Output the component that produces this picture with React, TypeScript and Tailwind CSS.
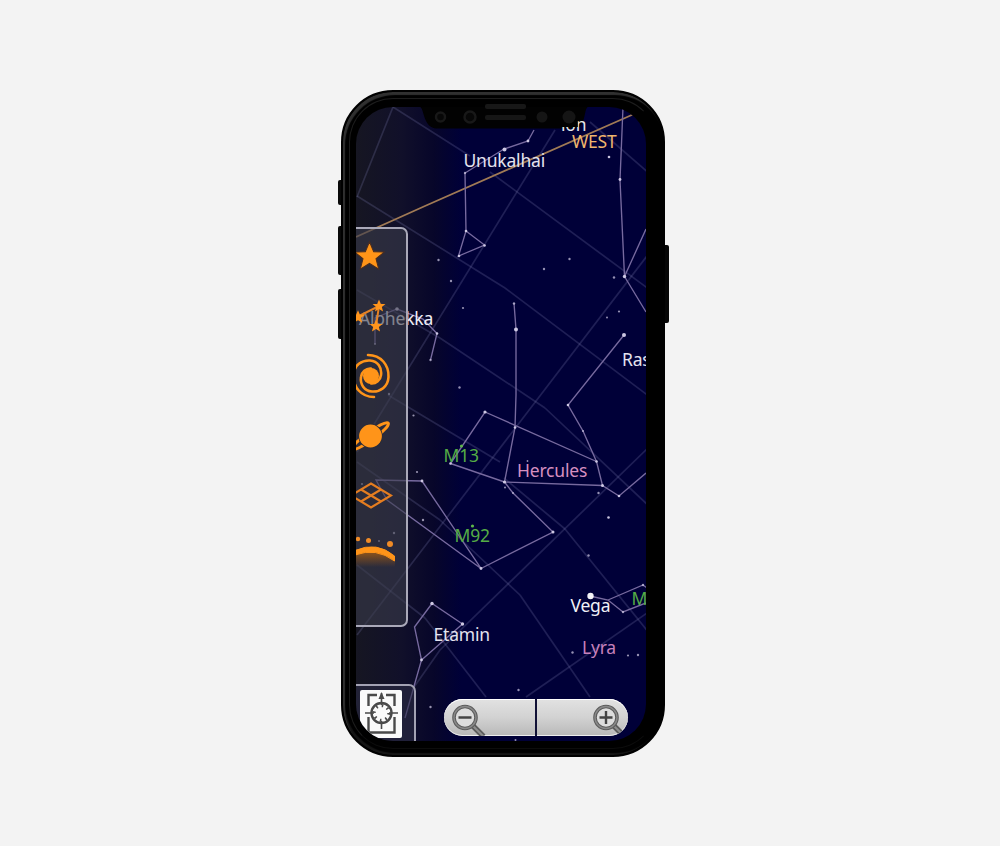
const gridLines: number[][] = [
  [393, 107, 357, 197], [393, 107, 470, 156], [490, 172, 650, 290],
  [357, 196, 505, 288], [505, 288, 650, 397], [555, 130, 357, 452], [590, 122, 650, 174],
  [357, 290, 440, 338], [440, 338, 545, 408], [545, 408, 650, 507], [650, 252, 357, 635],
  [388, 395, 500, 462], [504, 478, 565, 529], [565, 529, 650, 634], [357, 462, 440, 520], [440, 520, 520, 595],
  [650, 446, 440, 650], [440, 650, 412, 690], [357, 565, 425, 618],
  [425, 618, 486, 697], [520, 595, 590, 697], [650, 611, 526, 697],
];

const paths: string[] = [
  "M534 130L528 141L504 149L465 173L466 231L458.500 256L484.500 245L466 231",
  "M623 107L620 180L624.500 276.500L646 229M624.500 276.500L646 312",
  "M514 303L516 329.500V395L515 427.500L504.500 482L513 493L553 532L481 568.500L422 481L376 480L387 500L481 568.500",
  "M624 335L568 405L583 431L596.500 461.500L602.500 485.500L619 496L646 473",
  "M450.500 463.500L485 412L596.500 461.500M450.500 463.500L504.500 482L602.500 485.500",
  "M375 344V318L397 309L423 319L437 333.500L430.500 360",
  "M462.500 624L432 603.500L414.500 627L421.500 660L405 718M462.500 624L421.500 660",
  "M590 596L608 600L623 612L646 603M608 600L643 585L647 588",
];

const stars: number[][] = [
  [504.5, 149.5, 2], [528, 141, 1.4], [465, 173, 1.2], [609, 157, 1.3], [620, 179.5, 1.4],
  [466, 231, 1.3], [484.5, 245.5, 1.3], [459, 256, 1.3], [438.5, 260, 1.2], [451, 281, 1.2],
  [463, 308, 1.1], [544, 269, 1.2], [569.5, 259, 1.2], [614, 277.5, 1.2], [624.5, 276.5, 1.7],
  [607, 317.5, 1], [619, 311.5, 1.1], [514, 303.5, 1.2], [516, 329.5, 2], [624, 335, 2],
  [437, 333.5, 1.3], [430.5, 360, 1.2], [397, 309, 1.8], [375, 344, 1], [459.5, 387.5, 1.2],
  [568, 405, 1.3], [583, 431, 1.1], [485, 412, 1.6], [515, 427.5, 1.3], [596.5, 461.5, 1.3],
  [602.5, 485.5, 1.5], [619, 496, 1.3], [598.5, 493, 1.2], [608.5, 517.5, 1.3], [504.5, 482, 1.6],
  [505, 487.5, 1], [513, 493, 1], [553, 532, 1.5], [481, 568.5, 1.4], [588.5, 555.5, 1.2],
  [527.5, 461, 0.9], [450.5, 463.5, 1.3], [413.5, 415.5, 1.1], [417, 472, 1.1], [422, 481, 1.4],
  [423, 520, 1.2], [389, 394, 1.2], [362, 484, 1.1], [394, 533, 1.2], [379, 541, 1.1],
  [590.5, 596, 3.2], [643, 585, 1.2], [623, 612, 1.2], [432, 603.5, 1.7], [462.5, 624, 1.7],
  [421.5, 660, 1.4], [572.5, 652.5, 1.2], [628, 655.5, 1.1], [638, 655, 1.2], [518.5, 690, 1.2],
  [430.5, 707, 1.2], [515.5, 740, 1],
];

function StarMap() {
  return (
    <svg className="absolute inset-0 h-full w-full" viewBox="356 107 290 634" fill="none">
      <g stroke="#7c7ab0" strokeOpacity=".25" strokeWidth="1.7">
        {gridLines.map(([a, b, c, d], i) => <line key={i} x1={a} y1={b} x2={c} y2={d} />)}
      </g>
      <path d="M356 237L425 206L634 114" stroke="#a07a55" strokeWidth="1.8" />
      <g stroke="#776a9f" strokeWidth="1.35">{paths.map((d) => <path key={d} d={d} />)}</g>
      <g fill="#d4cfe8">{stars.map(([x, y, r], i) => <circle key={i} cx={x} cy={y} r={r} fill={r > 3 ? "#fff" : undefined} opacity={r < 1.3 ? 0.7 : 0.95} />)}</g>
      <circle cx="461.500" cy="446" r="1.600" fill="#5eb84a" />
      <circle cx="472.500" cy="526" r="1.600" fill="#5eb84a" />
    </svg>
  );
}

const labelBase = "absolute whitespace-nowrap text-[17.5px] leading-6 tracking-[-0.2px]";

function Labels() {
  return (
    <>
      <span className={`${labelBase} left-[216px] top-[22px] text-[#efb56d]`}>WEST</span>
      <span className={`${labelBase} left-[107.500px] top-[41px] text-[#e4e3ef]`}>Unukalhai</span>
      <span className={`${labelBase} left-[3px] top-[199px] text-[#f0eff6]`}>Alphekka</span>
      <span className={`${labelBase} left-[266px] top-[240px] text-[#e4e3ef]`}>Ras</span>
      <span className={`${labelBase} left-[87.500px] top-[336px] text-[#55ad45]`}>M13</span>
      <span className={`${labelBase} left-[161px] top-[351px] text-[#d68fc0]`}>Hercules</span>
      <span className={`${labelBase} left-[98.500px] top-[416px] text-[#55ad45]`}>M92</span>
      <span className={`${labelBase} left-[214.500px] top-[486px] text-[#f0f0f6]`}>Vega</span>
      <span className={`${labelBase} left-[275.500px] top-[479px] text-[#55ad45]`}>M</span>
      <span className={`${labelBase} left-[77.500px] top-[515px] text-[#e4e3ef]`}>Etamin</span>
      <span className={`${labelBase} left-[226px] top-[528px] text-[#c681bb]`}>Lyra</span>
    </>
  );
}

function LayerIcons() {
  return (
    <svg className="block h-[396px] w-[50px] shrink-0" viewBox="356 229 50 396" fill="none">
      <defs>
        <linearGradient id="ground" x1="0" y1="548" x2="0" y2="567" gradientUnits="userSpaceOnUse">
          <stop stopColor="#a75d12" /><stop offset="1" stopColor="#a75d12" stopOpacity="0" />
        </linearGradient>
        <path id="star" d="M0-14L4-4.600L14-4.200L6.200 2.200L8.800 12L0 6.600L-8.800 12L-6.200 2.200L-14-4.200L-4-4.600Z" />
        <path id="arm" d="M-3-21C10-21 18-11 17.500 1C17 11 9 16 1 15.500C-7 15-11 8-10 1C-9.500-4-5-8 0-7.500" />
      </defs>
      <use href="#star" transform="translate(369.500 256.500) scale(1.05)" fill="#ff9418" stroke="#4a2d20" strokeWidth="1" />
      <path d="M357 317L379 306L376 326" stroke="#e58224" strokeWidth="2" />
      <g fill="#ff951c">
        <use href="#star" transform="translate(379 306) scale(.46)" />
        <use href="#star" transform="translate(376 326) scale(.46)" />
        <use href="#star" transform="translate(358 317) scale(.48)" />
      </g>
      <g stroke="#ff9419" strokeWidth="2.600" strokeLinecap="round">
        <circle cx="371" cy="376" r="8" fill="#ff9419" stroke="none" />
        <use href="#arm" transform="translate(371 376)" />
        <use href="#arm" transform="translate(371 376) rotate(180)" />
      </g>
      <ellipse cx="370.500" cy="436" rx="22" ry="4" transform="rotate(-36 370.500 436)" stroke="#ff9419" strokeWidth="2.800" />
      <circle cx="370.500" cy="436" r="12.200" fill="#2b2c38" />
      <circle cx="370.500" cy="436" r="11.400" fill="#ff9419" />
      <path d="M351 495.500L371 483.500L391 495.500L371 507.500Z M361 489.500L381 501.500M381 489.500L361 501.500" stroke="#e47d20" strokeWidth="2.100" />
      <path d="M356 553Q376 540 395 558V567H356Z" fill="url(#ground)" />
      <path d="M355 550.500Q377 541 394.500 556V561Q376 547 355 555Z" fill="#ff9419" stroke="#ff9419" strokeWidth="1" />
      <g fill="#f08b26"><circle cx="358" cy="539" r="2.200" /><circle cx="368.500" cy="540.500" r="2.500" /><circle cx="390" cy="544" r="3" /></g>
    </svg>
  );
}

function CompassIcon() {
  return (
    <svg className="h-[47px] w-[42px]" viewBox="360 691 42 47" fill="none" stroke="#4a4a4a" strokeWidth="2.400">
      <path d="M377 696H368.500V707M386 696H394.500V707M368.500 718V733.500H394.500V718" />
      <circle cx="381.500" cy="714" r="10" strokeWidth="2.400" />
      <circle cx="381.500" cy="714" r="7.300" strokeWidth="3" strokeDasharray="1.600 4.133" />
      <path d="M381.500 694V706M381.500 722V730M365 714H374M389 714H398" strokeWidth="1.600" />
      <path d="M381.500 693L384.500 700H378.500Z" fill="#4a4a4a" stroke="none" />
    </svg>
  );
}

function Magnifier({ plus }: { plus?: boolean }) {
  return (
    <svg className="h-[37px] w-[37px] shrink-0" viewBox="0 0 37 37" fill="none">
      <path d="M23 27L33.500 37.500" stroke="#5b5b5b" strokeWidth="5.500" />
      <path d="M23 27L33.500 37.500" stroke="#8e8e8e" strokeWidth="2" />
      <circle cx="15" cy="18.500" r="11" fill="#ddd" stroke="#5d5d5d" strokeWidth="3.600" />
      <circle cx="15" cy="18.500" r="11" stroke="#898989" strokeWidth="1.400" />
      <path d={plus ? "M8.500 18.500H21.500M15 12V25" : "M8.500 18.500H21.500"} stroke="#444" strokeWidth="2.400" />
    </svg>
  );
}

function Notch() {
  return (
    <div className="absolute left-[64px] top-0">
      <svg className="block h-[22px] w-[168px]" viewBox="420 107 168 22">
        <path d="M420 107C424 107 423 128.500 437 128.500H575C586 128.500 584 107 588 107Z" fill="#020202" />
        <g fill="#070707" stroke="#181818" strokeWidth="2.500">
          <circle cx="440.500" cy="117" r="4.500" /><circle cx="470" cy="117" r="5.500" />
        </g>
        <rect x="485" y="115" width="41" height="5" rx="2" fill="#161616" />
        <g fill="#151515"><circle cx="542" cy="117" r="5.500" /><circle cx="569" cy="117" r="6.500" /></g>
      </svg>
      <div className="absolute left-[141px] top-[12px] flex h-[12px] w-[30px] items-end overflow-hidden text-[17.5px] leading-[14px] tracking-[-0.2px] text-[#e8e8e8] [clip-path:polygon(0_66%,56%_66%,56%_0,100%_0,100%_100%,0_100%)]">ion</div>
    </div>
  );
}

function Screen() {
  return (
    <div className="relative flex h-[634px] w-[290px] flex-col overflow-hidden rounded-[37px] bg-[linear-gradient(90deg,#161622_0,#11102a_45px,#07062a_78px,#000038_105px,#000038)] pt-[120px]">
      <StarMap />
      <Labels />
      <aside className="relative -ml-2 flex h-[400px] w-[60px] rounded-[7px] border-2 border-[#aaa9b9] bg-[#3b3c4b]/60 pl-[6px]">
        <LayerIcons />
      </aside>
      <footer className="relative mt-[57px] flex shrink-0 items-start gap-[28px]">
        <div className="-ml-2 flex h-[65px] w-[68px] shrink-0 rounded-[7px] border-2 border-[#a3a2b3] bg-[#2c2c44]/60 pl-[10px] pt-[4px]">
          <div className="h-[48px] w-[42px] rounded-[2px] bg-[#fafafa]"><CompassIcon /></div>
        </div>
        <div className="mt-[15px] flex h-[37px] w-[184px] shrink-0 overflow-hidden rounded-[19px] bg-gradient-to-b from-[#e2e2e2] via-[#d2d2d2] to-[#b8b8b8] shadow-[inset_0_1px_#fff,inset_0_-1px_#eee]">
          <div className="flex w-[91px] shrink-0 items-center pl-[6px]"><Magnifier /></div>
          <div className="w-[2px] shrink-0 bg-[#111136]" />
          <div className="flex flex-1 items-center pl-[54px]"><Magnifier plus /></div>
        </div>
      </footer>
      <Notch />
    </div>
  );
}

export default function App() {
  return (
    <main className="flex h-[846px] w-[1000px] items-start overflow-hidden bg-[#f3f3f3] pl-[338px] pt-[90px] font-['Noto_Sans',sans-serif]">
      <div className="-mr-[5px] flex w-2 shrink-0 flex-col pt-[90px]">
        <div className="h-[25px] rounded-[2px] bg-[#090909]" />
        <div className="mt-[21px] h-[49px] rounded-[2px] bg-[#090909]" />
        <div className="mt-[14px] h-[50px] rounded-[2px] bg-[#090909]" />
      </div>
      <div className="z-10 flex h-[667px] w-[324px] shrink-0 flex-col rounded-[52px] border-2 border-black bg-black p-[6px] shadow-[inset_2px_3px_1px_#303030,inset_2px_-2px_1px_#151515]">
        <div className="flex flex-1 flex-col rounded-[44px] border border-[#1d1d1d] border-b-[#0c0c0c] border-r-black bg-black pl-[6px]">
          <div className="z-10 mb-[-1px] ml-[129px] mt-[5px] h-[5px] w-[41px] shrink-0 rounded-[2px] bg-[#171717]" />
          <div className="-mt-[1px]"><Screen /></div>
        </div>
      </div>
      <div className="-ml-[4px] mt-[155px] h-[78px] w-2 shrink-0 rounded-[2px] bg-[#060606]" />
    </main>
  );
}
